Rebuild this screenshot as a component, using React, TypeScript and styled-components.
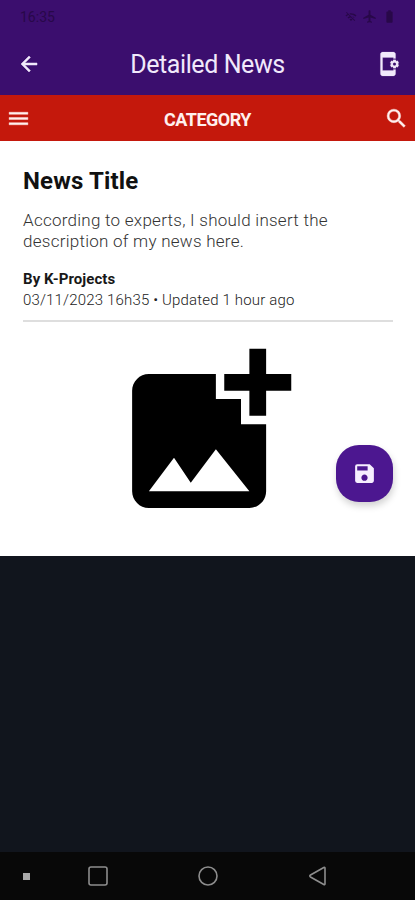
import React from "react";
import styled, { createGlobalStyle } from "styled-components";
import {
  MdAirplanemodeActive,
  MdAppSettingsAlt,
  MdArrowBack,
  MdBatteryFull,
  MdMenu,
  MdSave,
  MdSearch,
  MdWifiOff,
} from "react-icons/md";

const GlobalStyle = createGlobalStyle`
  * { box-sizing: border-box; }
  body { margin: 0; font-family: Roboto, sans-serif; }
  button { border: 0; padding: 0; background: none; color: inherit; font: inherit; }
  svg { display: block; }
`;

const Screen = styled.div`
  display: flex;
  flex-direction: column;
  width: 415px;
  height: 900px;
  overflow: hidden;
  background: #11151d;
`;

const StatusBar = styled.div`
  display: flex;
  align-items: center;
  justify-content: space-between;
  height: 33px;
  padding: 0 18px 0 20px;
  background: #3b0e6e;
  color: #280849;
  font-size: 14px;
`;

const StatusIcons = styled.div`
  display: flex;
  align-items: center;
  gap: 5px;
`;

const AppBar = styled.header`
  display: grid;
  grid-template-columns: 42px 1fr 42px;
  align-items: center;
  height: 62px;
  padding: 0 6px 0 8px;
  background: #3b0e6e;
  color: #f1e9fb;
`;

const IconButton = styled.button<{ $weight?: number }>`
  display: flex;
  align-items: center;
  justify-content: center;

  path:not([fill="none"]) {
    stroke: currentColor;
    stroke-width: ${({ $weight = 0 }) => $weight};
  }
`;

const ScreenTitle = styled.h1`
  margin: 2px 2px 0 0;
  font-size: 25px;
  font-weight: 400;
  line-height: 30px;
  letter-spacing: -0.42px;
  text-align: center;
`;

const CategoryBar = styled.nav`
  display: flex;
  align-items: center;
  justify-content: space-between;
  height: 46px;
  padding: 0 6px;
  background: #c4180c;
  color: #fff0ee;
`;

const Category = styled.span`
  font-size: 18px;
  font-weight: 700;
  letter-spacing: -0.5px;
  line-height: 24px;
  padding-top: 3px;
`;

const Article = styled.main`
  position: relative;
  height: 415px;
  padding: 25px 22px 0 23px;
  background: #fff;
`;

const Headline = styled.h2`
  margin: 0;
  color: #111;
  font-size: 24px;
  font-weight: 700;
  line-height: 30px;
  letter-spacing: 0.15px;
`;

const Description = styled.p`
  margin: 14px 0 0;
  color: #333;
  font-size: 17px;
  font-weight: 300;
  line-height: 21px;
  letter-spacing: 0.26px;
`;

const Author = styled.div`
  margin-top: 17px;
  color: #181818;
  font-size: 15px;
  font-weight: 700;
  line-height: 20px;
  letter-spacing: 0.07px;
`;

const Dateline = styled.div`
  margin-top: 1px;
  color: #222;
  font-size: 15px;
  font-weight: 300;
  line-height: 20px;
  letter-spacing: 0.17px;
`;

const Divider = styled.hr`
  height: 2px;
  margin: 10px 0 0;
  border: 0;
  background: #dedede;
`;

const Photo = styled.div`
  display: flex;
  justify-content: center;
  margin-top: 10px;
  padding-right: 1px;
`;

const SaveButton = styled.button`
  position: absolute;
  right: 22px;
  bottom: 54px;
  display: flex;
  align-items: center;
  justify-content: center;
  width: 57px;
  height: 57px;
  border-radius: 23px;
  background: #4c1790;
  color: #f6efff;
  box-shadow: 1px 4px 7px rgba(0, 0, 0, 0.18);
`;

const NavigationBar = styled.footer`
  display: grid;
  grid-template-columns: 53px 89px 131px 90px;
  align-items: center;
  justify-items: center;
  height: 48px;
  margin-top: auto;
  background: #080808;
  color: #8d8d8d;
`;

const Dot = styled.span`
  width: 7px;
  height: 7px;
  background: #aaa;
`;

function NavIcon({ children }: { children: React.ReactNode }) {
  return (
    <svg width="22" height="22" viewBox="0 0 22 22" fill="none" stroke="currentColor" strokeWidth="1.6">
      {children}
    </svg>
  );
}

export default function App() {
  return (
    <>
      <GlobalStyle />
      <Screen>
        <StatusBar>
          <span>16:35</span>
          <StatusIcons>
            <MdWifiOff size={12} />
            <MdAirplanemodeActive size={15} />
            <MdBatteryFull size={15} />
          </StatusIcons>
        </StatusBar>
        <AppBar>
          <IconButton aria-label="Back" $weight={0.5}><MdArrowBack size={24} /></IconButton>
          <ScreenTitle>Detailed News</ScreenTitle>
          <IconButton aria-label="App settings" $weight={0.2}><MdAppSettingsAlt size={26} /></IconButton>
        </AppBar>
        <CategoryBar>
          <IconButton aria-label="Menu" $weight={0.4}><MdMenu size={25} /></IconButton>
          <Category>CATEGORY</Category>
          <IconButton aria-label="Search" $weight={0.4}><MdSearch size={25} /></IconButton>
        </CategoryBar>
        <Article>
          <Headline>News Title</Headline>
          <Description>
            According to experts, I should insert the
            <br />
            description of my news here.
          </Description>
          <Author>By K-Projects</Author>
          <Dateline>03/11/2023 16h35 • Updated 1 hour ago</Dateline>
          <Divider />
          <Photo>
            <svg width="201" height="201" viewBox="0 0 24 24" fill="#000">
              <path d="M19 7v3h-2V7h-3V5h3V2h2v3h3v2zM16 11V8h-3V5H5c-1.1 0-2 .9-2 2v12c0 1.1.9 2 2 2h12c1.1 0 2-.9 2-2v-8zM5 19l3-4 2 3 3-4 4 5z" />
            </svg>
          </Photo>
          <SaveButton aria-label="Save"><MdSave size={25} /></SaveButton>
        </Article>
        <NavigationBar>
          <Dot />
          <NavIcon><rect x="2" y="2" width="18" height="18" rx="2" /></NavIcon>
          <NavIcon><circle cx="11" cy="11" r="9" /></NavIcon>
          <NavIcon><path d="M18 3.2v15.6q0 1.4-1.2.7L3.5 12q-1.4-1 0-2L16.8 2.5q1.2-.7 1.2.7z" /></NavIcon>
        </NavigationBar>
      </Screen>
    </>
  );
}
